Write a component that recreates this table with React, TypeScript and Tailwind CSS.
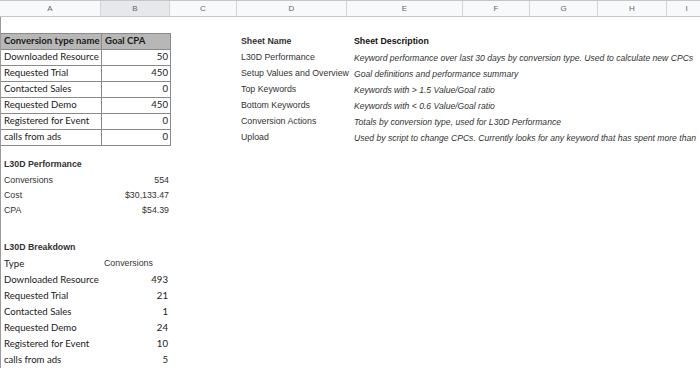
const cols = [
  { key: "A", w: "w-[101px]" },
  { key: "B", w: "w-[69px]" },
  { key: "C", w: "w-[67px]" },
  { key: "D", w: "w-[110px]" },
  { key: "E", w: "w-[116px]" },
  { key: "F", w: "w-[67px]" },
  { key: "G", w: "w-[68px]" },
  { key: "H", w: "w-[69px]" },
  { key: "I", w: "w-[40px]" },
];

const sheets = [
  ["L30D Performance", "Keyword performance over last 30 days by conversion type. Used to calculate new CPCs"],
  ["Setup Values and Overview", "Goal definitions and performance summary"],
  ["Top Keywords", "Keywords with > 1.5 Value/Goal ratio"],
  ["Bottom Keywords", "Keywords with < 0.6 Value/Goal ratio"],
  ["Conversion Actions", "Totals by conversion type, used for L30D Performance"],
  ["Upload", "Used by script to change CPCs. Currently looks for any keyword that has spent more than"],
];

const goals = [
  ["Downloaded Resource", "50"],
  ["Requested Trial", "450"],
  ["Contacted Sales", "0"],
  ["Requested Demo", "450"],
  ["Registered for Event", "0"],
  ["calls from ads", "0"],
];

const performance = [
  ["Conversions", "554", "h-[15px]"],
  ["Cost", "$30,133.47", "h-[15px]"],
  ["CPA", "$54.39", "h-[16px]"],
];

const breakdown = [
  ["Downloaded Resource", "493"],
  ["Requested Trial", "21"],
  ["Contacted Sales", "1"],
  ["Requested Demo", "24"],
  ["Registered for Event", "10"],
  ["calls from ads", "5"],
];

const calibri = "font-['Lato','Open_Sans',sans-serif] text-[9.6px] text-[#1a1a1a]";
const arial = "font-['Liberation_Sans',Arial,sans-serif] text-[8.8px] text-[#333]";

const SheetCells = ({ name, desc, bold }: { name: string; desc: string; bold?: boolean }) => (
  <>
    <div className="w-[67px] shrink-0" />
    <div className={`${arial} w-[110px] shrink-0 whitespace-nowrap pl-[3px] ${bold ? "font-bold text-[#111]" : ""}`}>
      {name}
    </div>
    <div
      className={`font-['Liberation_Sans',Arial,sans-serif] text-[8.6px] shrink-0 whitespace-nowrap pl-[6px] ${
        bold ? "font-bold text-[8.8px] text-[#111]" : "italic text-[#333]"
      }`}
    >
      {desc}
    </div>
  </>
);

export default function App() {
  return (
    <div className="h-[371px] w-[700px] overflow-hidden bg-white">
      {/* column headers */}
      <div className="flex h-[17px] border-b border-t border-[#c6c6c6] bg-[#f8f9fa]">
        {cols.map((c) => (
          <div
            key={c.key}
            className={`${c.w} flex shrink-0 items-center justify-center border-r border-[#d4d4d4] font-['Liberation_Sans',Arial,sans-serif] text-[8px] text-[#666] ${
              c.key === "B" ? "bg-[#e6e8eb]" : ""
            }`}
          >
            {c.key}
          </div>
        ))}
      </div>

      <div className="border-l border-[#9a9a9a]">
        <div className="h-[16px]" />

        {/* goal table header */}
        <div className="flex h-[17px] items-center">
          <div className="flex h-full w-[170px] shrink-0 border-b border-t border-[#8a8a8a] bg-[#b7b7b7]">
            <div className={`${calibri} flex w-[101px] items-center border-r border-[#8a8a8a] pl-[3px] font-bold whitespace-nowrap`}>
              Conversion type name
            </div>
            <div className={`${calibri} flex flex-1 items-center border-r border-[#8a8a8a] pl-[3px] font-bold`}>
              Goal CPA
            </div>
          </div>
          <SheetCells name="Sheet Name" desc="Sheet Description" bold />
        </div>

        {goals.map(([label, value], i) => (
          <div key={label} className="flex h-[16px] items-center">
            <div className="flex h-full w-[170px] shrink-0 border-b border-[#8a8a8a]">
              <div className={`${calibri} flex w-[101px] items-center border-r border-[#8a8a8a] pl-[3px] whitespace-nowrap`}>
                {label}
              </div>
              <div className={`${calibri} flex flex-1 items-center justify-end border-r border-[#8a8a8a] pr-[2px]`}>
                {value}
              </div>
            </div>
            <SheetCells name={sheets[i][0]} desc={sheets[i][1]} />
          </div>
        ))}

        <div className="h-[11px]" />

        {/* L30D performance */}
        <div className={`${arial} flex h-[16px] items-center pl-[3px] font-bold text-[#111]`}>L30D Performance</div>
        {performance.map(([label, value, h]) => (
          <div key={label} className={`flex ${h} items-center`}>
            <div className={`${arial} w-[101px] pl-[3px]`}>{label}</div>
            <div className={`${arial} w-[69px] pr-[2px] text-right`}>{value}</div>
          </div>
        ))}

        <div className="h-[20px]" />

        {/* L30D breakdown */}
        <div className={`${arial} flex h-[17px] items-center pl-[3px] font-bold text-[#111]`}>L30D Breakdown</div>
        <div className="flex h-[16px] items-center">
          <div className={`${calibri} w-[101px] pl-[3px]`}>Type</div>
          <div className={`${arial} w-[69px] pl-[2px]`}>Conversions</div>
        </div>
        {breakdown.map(([label, value]) => (
          <div key={label} className="flex h-[16px] items-center">
            <div className={`${calibri} w-[101px] whitespace-nowrap pl-[3px]`}>{label}</div>
            <div className={`${calibri} w-[69px] pr-[3px] text-right`}>{value}</div>
          </div>
        ))}
      </div>
    </div>
  );
}
